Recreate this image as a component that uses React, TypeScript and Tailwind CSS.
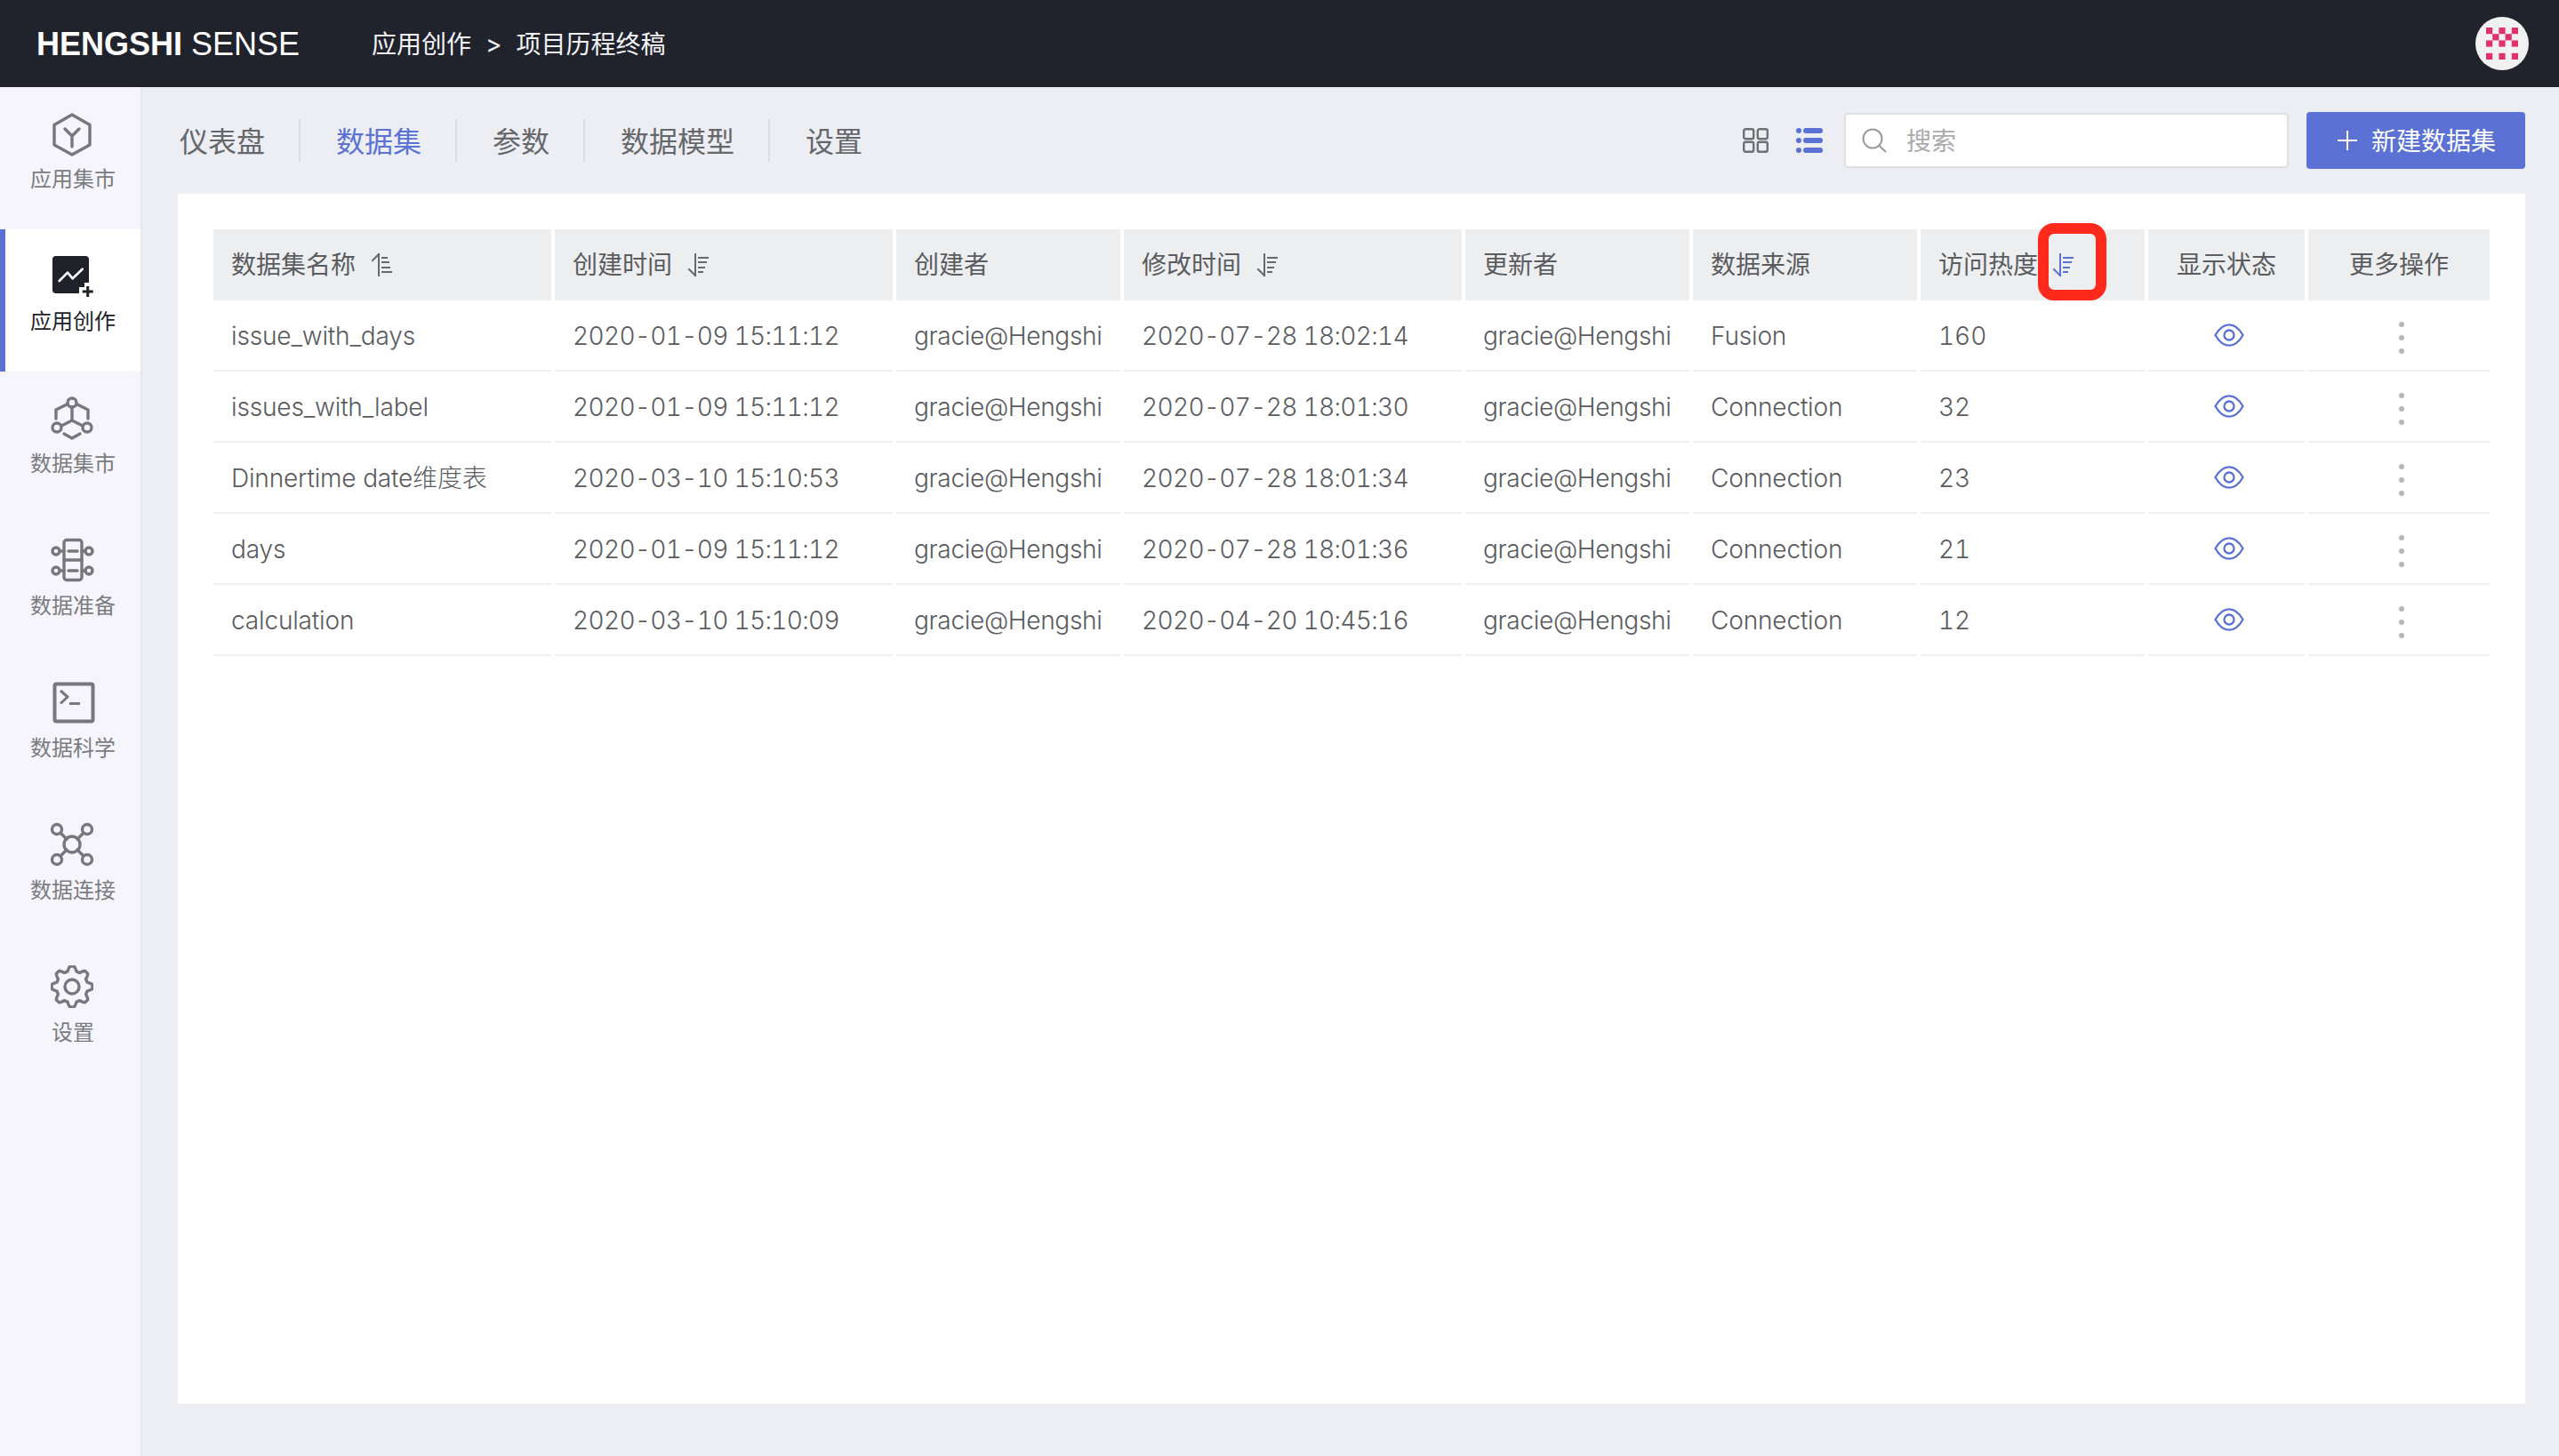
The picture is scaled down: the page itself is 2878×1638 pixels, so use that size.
import React from "react";

const ICON = "#76787c";
const BLUE = "#5b72d4";

type IconProps = { c?: string };

const Box = ({ children, c = ICON }: { children: React.ReactNode; c?: string }) => (
  <svg width="48" height="48" viewBox="0 0 48 48" fill="none" stroke={c} strokeWidth="3.4" strokeLinecap="round" strokeLinejoin="round" className="overflow-visible">
    {children}
  </svg>
);

const MarketIcon = () => (
  <Box>
    <path d="M24 3 44 14.5V37L24 48 4 37V14.5Z" />
    <path d="M16 19 24 27 32 19M24 27V39" />
  </Box>
);

const CreateIcon = () => (
  <svg width="48" height="48" viewBox="0 0 48 48" fill="none" className="overflow-visible">
    <rect x="2" y="2" width="41" height="42" rx="4" fill="#1f2229" />
    <path d="M9.7 30 19 20.7 24.7 27.3 35.7 16.7" stroke="#fff" strokeWidth="2.6" strokeLinecap="round" strokeLinejoin="round" />
    <path d="M32 37H38V32H48V48H32Z" fill="#fff" />
    <path d="M41.7 36V48M35.7 42H47.7" stroke="#1f2229" strokeWidth="3" />
  </svg>
);

const DataMarketIcon = () => (
  <Box>
    <circle cx="24" cy="7" r="5" />
    <circle cx="7" cy="35" r="5" />
    <circle cx="41" cy="35" r="5" />
    <path d="M24 12V27M24 27 12 33M24 27 36 33" />
    <path d="M18 9 6 15V25M30 9 42 15V25M15 42 24 47 33 42" />
  </Box>
);

const PrepIcon = () => (
  <Box>
    <rect x="15" y="1.5" width="20" height="45" rx="3" />
    <path d="M15 24H35M20 14H30M20 36H30M10 14H15M10 36H15M35 14H39M35 36H39" />
    <circle cx="6" cy="14" r="4" />
    <circle cx="6" cy="36" r="4" />
    <circle cx="43" cy="14" r="4" />
    <circle cx="43" cy="36" r="4" />
  </Box>
);

const TerminalIcon = () => (
  <Box>
    <rect x="4.5" y="3.5" width="43" height="42" rx="2" strokeWidth="4" />
    <path d="M11 11 19 18 11 25.5M21 25.5H33" strokeWidth="3" strokeLinecap="butt" />
  </Box>
);

const ConnectIcon = () => (
  <Box>
    <circle cx="24" cy="24" r="9" />
    <circle cx="7" cy="7" r="5.5" />
    <circle cx="41" cy="7" r="5.5" />
    <circle cx="7" cy="41" r="5.5" />
    <circle cx="41" cy="41" r="5.5" />
    <path d="M11 11 18 18M37 11 30 18M11 37 18 30M37 37 30 30" />
  </Box>
);

const gearPath = () => {
  const pts: string[] = [];
  const n = 192;
  for (let i = 0; i < n; i++) {
    const t = (i / n) * Math.PI * 2;
    const k = Math.max(-1, Math.min(1, 1.5 * Math.cos(8 * t)));
    const r = 20.3 + 2.6 * k;
    pts.push(`${(24 + r * Math.sin(t)).toFixed(2)} ${(24 - r * Math.cos(t)).toFixed(2)}`);
  }
  return `M${pts.join("L")}Z`;
};

const GearIcon = () => (
  <svg width="48" height="48" viewBox="0 0 48 48" fill="none" stroke={ICON} strokeWidth="3.4" strokeLinejoin="round">
    <path d={gearPath()} />
    <circle cx="24" cy="24" r="8" />
  </svg>
);

const SortUp = () => (
  <svg width="26" height="28" viewBox="0 0 26 28" fill="none" stroke="#66686c" strokeWidth="2" strokeLinecap="square">
    <path d="M10 2V26M10 2 3 9M14 6H19M14 11H21M14 17H22M14 22H24" />
  </svg>
);

const SortDown = ({ c = "#66686c" }: IconProps) => (
  <svg width="26" height="28" viewBox="0 0 26 28" fill="none" stroke={c} strokeWidth="2" strokeLinecap="square">
    <path d="M10 2V26M10 26 3 19M14 6H24M14 11H22M14 17H20M14 22H18" />
  </svg>
);

const Eye = () => (
  <svg width="34" height="26" viewBox="0 0 34 26" fill="none" stroke={BLUE} strokeWidth="2.3">
    <path d="M1.5 13C6 5 11 1.3 17 1.3S28 5 32.5 13C28 21 23 24.7 17 24.7S6 21 1.5 13Z" />
    <circle cx="17" cy="13" r="5.5" />
  </svg>
);

const Avatar = () => {
  const cells = [
    [0, 0], [2, 0], [4, 0],
    [1, 1], [3, 1],
    [0, 2], [2, 2], [4, 2],
    [0, 4], [2, 4], [4, 4],
  ];
  return (
    <svg width="60" height="60" viewBox="0 0 60 60">
      <circle cx="30" cy="30" r="30" fill="#f1f1f2" />
      {cells.map(([x, y]) => (
        <rect key={`${x}-${y}`} x={12 + x * 7.2} y={12 + y * 7.2} width="7.2" height="7.2" fill="#e0306e" />
      ))}
    </svg>
  );
};

const nav = [
  { label: "应用集市", icon: <MarketIcon /> },
  { label: "应用创作", icon: <CreateIcon />, active: true },
  { label: "数据集市", icon: <DataMarketIcon /> },
  { label: "数据准备", icon: <PrepIcon /> },
  { label: "数据科学", icon: <TerminalIcon /> },
  { label: "数据连接", icon: <ConnectIcon /> },
  { label: "设置", icon: <GearIcon /> },
];

const tabs = ["仪表盘", "数据集", "参数", "数据模型", "设置"];

const heads: { label: string; icon?: React.ReactNode; center?: boolean; gap?: string }[] = [
  { label: "数据集名称", icon: <SortUp />, gap: "ml-4" },
  { label: "创建时间", icon: <SortDown />, gap: "ml-4" },
  { label: "创建者" },
  { label: "修改时间", icon: <SortDown />, gap: "ml-4" },
  { label: "更新者" },
  { label: "数据来源" },
  { label: "访问热度", icon: <SortDown c={BLUE} />, gap: "ml-[15px]" },
  { label: "显示状态", center: true },
  { label: "更多操作", center: true },
];

const rows = [
  ["issue_with_days", "2020-01-09 15:11:12", "gracie@Hengshi", "2020-07-28 18:02:14", "gracie@Hengshi", "Fusion", "160"],
  ["issues_with_label", "2020-01-09 15:11:12", "gracie@Hengshi", "2020-07-28 18:01:30", "gracie@Hengshi", "Connection", "32"],
  ["Dinnertime date维度表", "2020-03-10 15:10:53", "gracie@Hengshi", "2020-07-28 18:01:34", "gracie@Hengshi", "Connection", "23"],
  ["days", "2020-01-09 15:11:12", "gracie@Hengshi", "2020-07-28 18:01:36", "gracie@Hengshi", "Connection", "21"],
  ["calculation", "2020-03-10 15:10:09", "gracie@Hengshi", "2020-04-20 10:45:16", "gracie@Hengshi", "Connection", "12"],
];

const COLS = "grid grid-cols-[380px_380px_252px_380px_252px_252px_252px_176px_204px] gap-x-1";
const cellClass = (i: number) => {
  if (i === 1 || i === 3) return "flex h-20 items-center whitespace-nowrap border-b-2 border-[#eff0f2] pl-5 pt-[2px] font-light tabular-nums tracking-[-0.65px]";
  if (i === 6) return "flex h-20 items-center whitespace-nowrap border-b-2 border-[#eff0f2] pl-5 pt-[2px] font-light tabular-nums";
  if (i === 2 || i === 4) return "flex h-20 items-center whitespace-nowrap border-b-2 border-[#eff0f2] pl-5 pt-[2px] font-light tracking-[-0.3px]";
  return "flex h-20 items-center whitespace-nowrap border-b-2 border-[#eff0f2] pl-5 pt-[2px] font-light tracking-[-0.15px]";
};

export default function App() {
  return (
    <div className="flex h-[1638px] w-[2878px] flex-col overflow-hidden bg-[#eceef3] font-['Inter','Noto_Sans_CJK_SC',sans-serif] text-[28px] text-[#595b60]">
      <header className="flex h-[98px] shrink-0 items-center bg-[#20222c] pl-[41px] pr-[34px] text-white">
        <div className="w-[377px] whitespace-nowrap pt-[2px] font-['Liberation_Sans','Noto_Sans_CJK_SC',sans-serif] text-[36px] leading-none">
          <span className="font-bold">HENGSHI</span> SENSE
        </div>
        <div className="flex items-center whitespace-nowrap pt-[2px] text-[28px] text-[#f2f3f5]">
          <span>应用创作</span>
          <span className="mx-4">&gt;</span>
          <span>项目历程终稿</span>
        </div>
        <div className="ml-auto">
          <Avatar />
        </div>
      </header>

      <div className="flex flex-1">
        <aside className="w-[160px] shrink-0 border-r-2 border-[#e7e8ed] bg-[#f5f5fb]">
          {nav.map((n) => (
            <div
              key={n.label}
              className={
                n.active
                  ? "flex h-[160px] flex-col items-center bg-white pl-1 pt-7 text-[#1f2229] shadow-[inset_6px_0_0_#5b72d4]"
                  : "flex h-[160px] flex-col items-center pl-1 pt-7 text-[#7a7c80]"
              }
            >
              <div className="flex h-12 w-12 items-center justify-center">{n.icon}</div>
              <div className="ml-[2px] mt-3 text-[24px] leading-8">{n.label}</div>
            </div>
          ))}
        </aside>

        <main className="flex flex-1 flex-col pl-10 pr-[38px]">
          <div className="flex h-[120px] shrink-0 items-center">
            <nav className="flex items-center pl-[2px] text-[32px] leading-[48px]">
              {tabs.map((t, i) => (
                <div
                  key={t}
                  className={
                    (i === 0 ? "pr-[38px] " : "pl-10 pr-[38px] ") +
                    (i === 4 ? "" : "border-r-2 border-[#dcdde2] ") +
                    (i === 1 ? "text-[#5b72d4]" : "text-[#65676b]")
                  }
                >
                  <span className="relative top-[2px]">{t}</span>
                </div>
              ))}
            </nav>
            <div className="ml-auto flex items-center">
              <svg width="29" height="28" viewBox="0 0 29 28" fill="none" stroke="#6e7074" strokeWidth="2.4">
                <rect x="1.2" y="1.2" width="11" height="11" rx="2" />
                <rect x="16.8" y="1.2" width="11" height="11" rx="2" />
                <rect x="1.2" y="15.8" width="11" height="11" rx="2" />
                <rect x="16.8" y="15.8" width="11" height="11" rx="2" />
              </svg>
              <svg className="ml-[30px]" width="31" height="28" viewBox="0 0 31 28" fill={BLUE}>
                <circle cx="4" cy="3" r="3" />
                <circle cx="4" cy="14" r="3" />
                <circle cx="4" cy="25" r="3" />
                <rect x="9" y="0" width="22" height="6" rx="3" />
                <rect x="9" y="11" width="22" height="6" rx="3" />
                <rect x="9" y="22" width="22" height="6" rx="3" />
              </svg>
              <div className="ml-6 flex h-[62px] w-[500px] items-center rounded border-2 border-[#dfe0e3] bg-white pl-[18px] text-[#a9abae]">
                <svg width="28" height="28" viewBox="0 0 28 28" fill="none" stroke="#9a9b9d" strokeWidth="2">
                  <circle cx="12" cy="12" r="10.5" />
                  <path d="M19.5 20 27 27" />
                </svg>
                <span className="ml-[22px] pt-[2px]">搜索</span>
              </div>
              <button className="ml-5 flex h-16 w-[246px] items-center rounded bg-[#5b72d4] pl-[35px] text-[28px] text-white">
                <svg width="22" height="22" viewBox="0 0 22 22" fill="none" stroke="#fff" strokeWidth="2">
                  <path d="M11 0V22M0 11H22" />
                </svg>
                <span className="ml-4 pt-[2px]">新建数据集</span>
              </button>
            </div>
          </div>

          <section className="relative h-[1361px] bg-white p-10">
            <div className={COLS}>
              {heads.map((h) => (
                <div
                  key={h.label}
                  className={
                    h.center
                      ? "flex h-20 items-center justify-center bg-[#edeef0] text-[#5a5c60]"
                      : "flex h-20 items-center bg-[#edeef0] pl-5 text-[#5a5c60]"
                  }
                >
                  <span>{h.label}</span>
                  {h.icon && <span className={h.gap}>{h.icon}</span>}
                </div>
              ))}
            </div>
            {rows.map((r) => (
              <div key={r[0]} className={COLS}>
                {r.map((c, i) => (
                  <div key={i} className={cellClass(i)}>
                    {c}
                  </div>
                ))}
                <div className="flex h-20 items-center justify-center border-b-2 border-[#eff0f2] pl-[6px]">
                  <Eye />
                </div>
                <div className="flex h-20 flex-col items-center justify-center gap-[9px] border-b-2 border-[#eff0f2] pl-[6px] pt-[6px]">
                  <span className="h-[6px] w-[6px] rounded-full bg-[#b5b8bb]" />
                  <span className="h-[6px] w-[6px] rounded-full bg-[#b5b8bb]" />
                  <span className="h-[6px] w-[6px] rounded-full bg-[#b5b8bb]" />
                </div>
              </div>
            ))}
            <div className="absolute left-[2092px] top-[33px] h-[87px] w-[77px] rounded-[18px] border-[12px] border-[#ff2a1c]" />
          </section>
        </main>
      </div>
    </div>
  );
}
